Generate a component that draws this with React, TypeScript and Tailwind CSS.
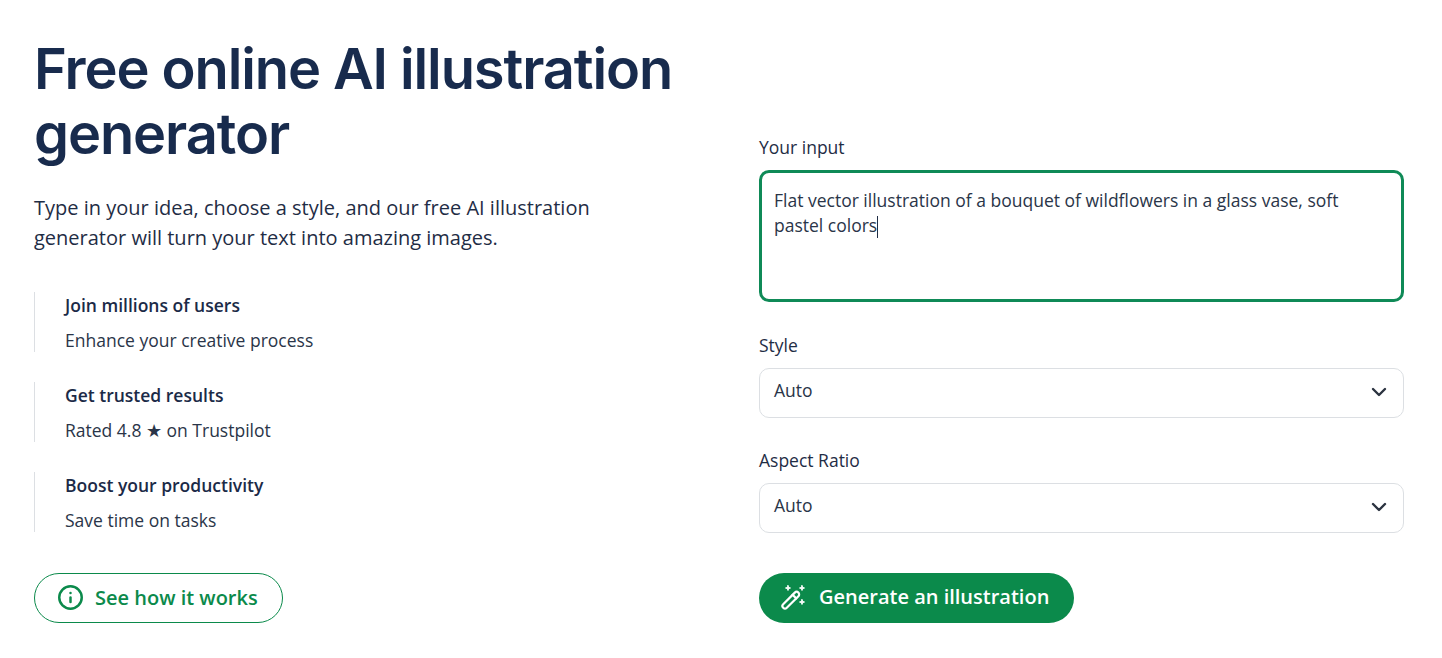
import React from "react";
import { ChevronDown, Info } from "lucide-react";

const features = [
  { title: "Join millions of users", text: "Enhance your creative process" },
  { title: "Get trusted results", text: "Rated 4.8 ★ on Trustpilot" },
  { title: "Boost your productivity", text: "Save time on tasks" },
];

const Sparkle = ({ x, y, r }: { x: number; y: number; r: number }) => (
  <path
    d={`M${x} ${y - r}L${x + r * 0.3} ${y - r * 0.3}L${x + r} ${y}L${x + r * 0.3} ${y + r * 0.3}L${x} ${y + r}L${x - r * 0.3} ${y + r * 0.3}L${x - r} ${y}L${x - r * 0.3} ${y - r * 0.3}Z`}
    fill="currentColor"
    stroke="currentColor"
    strokeWidth="0.8"
  />
);

const WandIcon = () => (
  <svg width="28" height="28" viewBox="0 0 28 28" fill="none" stroke="currentColor" strokeWidth="2.2" strokeLinecap="round" strokeLinejoin="round">
    <path d="M3.200 21.200 14.800 9.600a2.500 2.500 0 0 1 3.600 3.600L6.800 24.800a2.500 2.500 0 0 1-3.600-3.600Z" />
    <path d="m12.600 11.800 3.600 3.600" />
    <Sparkle x={8} y={5} r={2.6} />
    <Sparkle x={22} y={5} r={2.6} />
    <Sparkle x={22} y={19} r={2.6} />
  </svg>
);

const SelectField = ({ label }: { label: string }) => (
  <div>
    <div className="text-[17.5px] leading-[24px] text-[#1f2d45]">{label}</div>
    <div className="mt-[11px] flex h-[50px] items-center justify-between rounded-[10px] border border-[#dcdfe3] bg-white pl-[14px] pr-[12px] text-[17.5px] text-[#2a3548]">
      <span className="-translate-y-[3px]">Auto</span>
      <ChevronDown size={24} strokeWidth={2.4} className="-translate-y-px text-[#2b3340]" />
    </div>
  </div>
);

export default function App() {
  return (
    <div
      className="grid h-[658px] w-[1442px] grid-cols-[725px_645px] bg-white pl-[34px] text-[#1f2d45]"
      style={{ fontFamily: '"Open Sans", "Noto Sans", sans-serif' }}
    >
      <div className="pt-[37px]">
        <h1
          className="w-[680px] text-[56px] font-semibold leading-[65px] tracking-[-1.1px] text-[#182b4d]"
          style={{ fontFamily: "Inter, sans-serif" }}
        >
          Free online AI illustration generator
        </h1>
        <p className="mt-[26px] w-[600px] text-[20px] leading-[30px]">
          Type in your idea, choose a style, and our free AI illustration generator will turn your text into amazing images.
        </p>
        <div className="mt-[39px] flex flex-col gap-[30px]">
          {features.map((f) => (
            <div key={f.title} className="h-[60px] border-l border-[#dcdfe3] pl-[30px]">
              <div className="text-[17.5px] font-semibold leading-[26px] text-[#1b2a47]">{f.title}</div>
              <div className="mt-[9px] text-[17.5px] leading-[26px] text-[#2a3548]">{f.text}</div>
            </div>
          ))}
        </div>
        <button className="mt-[41px] flex h-[50px] w-[249px] items-center gap-[11px] rounded-full border border-[#0b8a4b] pb-px pl-[22px] text-[20px] font-semibold text-[#0b8a4b]">
          <Info size={27} strokeWidth={2.2} />
          See how it works
        </button>
      </div>

      <div className="pt-[135px]">
        <div className="text-[17.5px] leading-[24px]">Your input</div>
        <div className="mt-[11px] h-[132px] rounded-[10px] border-[3px] border-[#0f8a57] px-[12px] pt-[15px] text-[17.5px] leading-[25px] text-[#2a3548]">
          Flat vector illustration of a bouquet of wildflowers in a glass vase, soft pastel colors
          <span className="-my-[4px] inline-block h-[22px] w-px bg-[#1f2d45] align-middle" />
        </div>
        <div className="mt-[31px] flex flex-col gap-[30px]">
          <SelectField label="Style" />
          <SelectField label="Aspect Ratio" />
        </div>
        <button className="mt-[40px] flex h-[50px] w-[315px] items-center gap-[11px] rounded-full bg-[#0b8a4b] pb-[2px] pl-[21px] text-[20px] font-semibold text-white">
          <WandIcon />
          Generate an illustration
        </button>
      </div>
    </div>
  );
}
